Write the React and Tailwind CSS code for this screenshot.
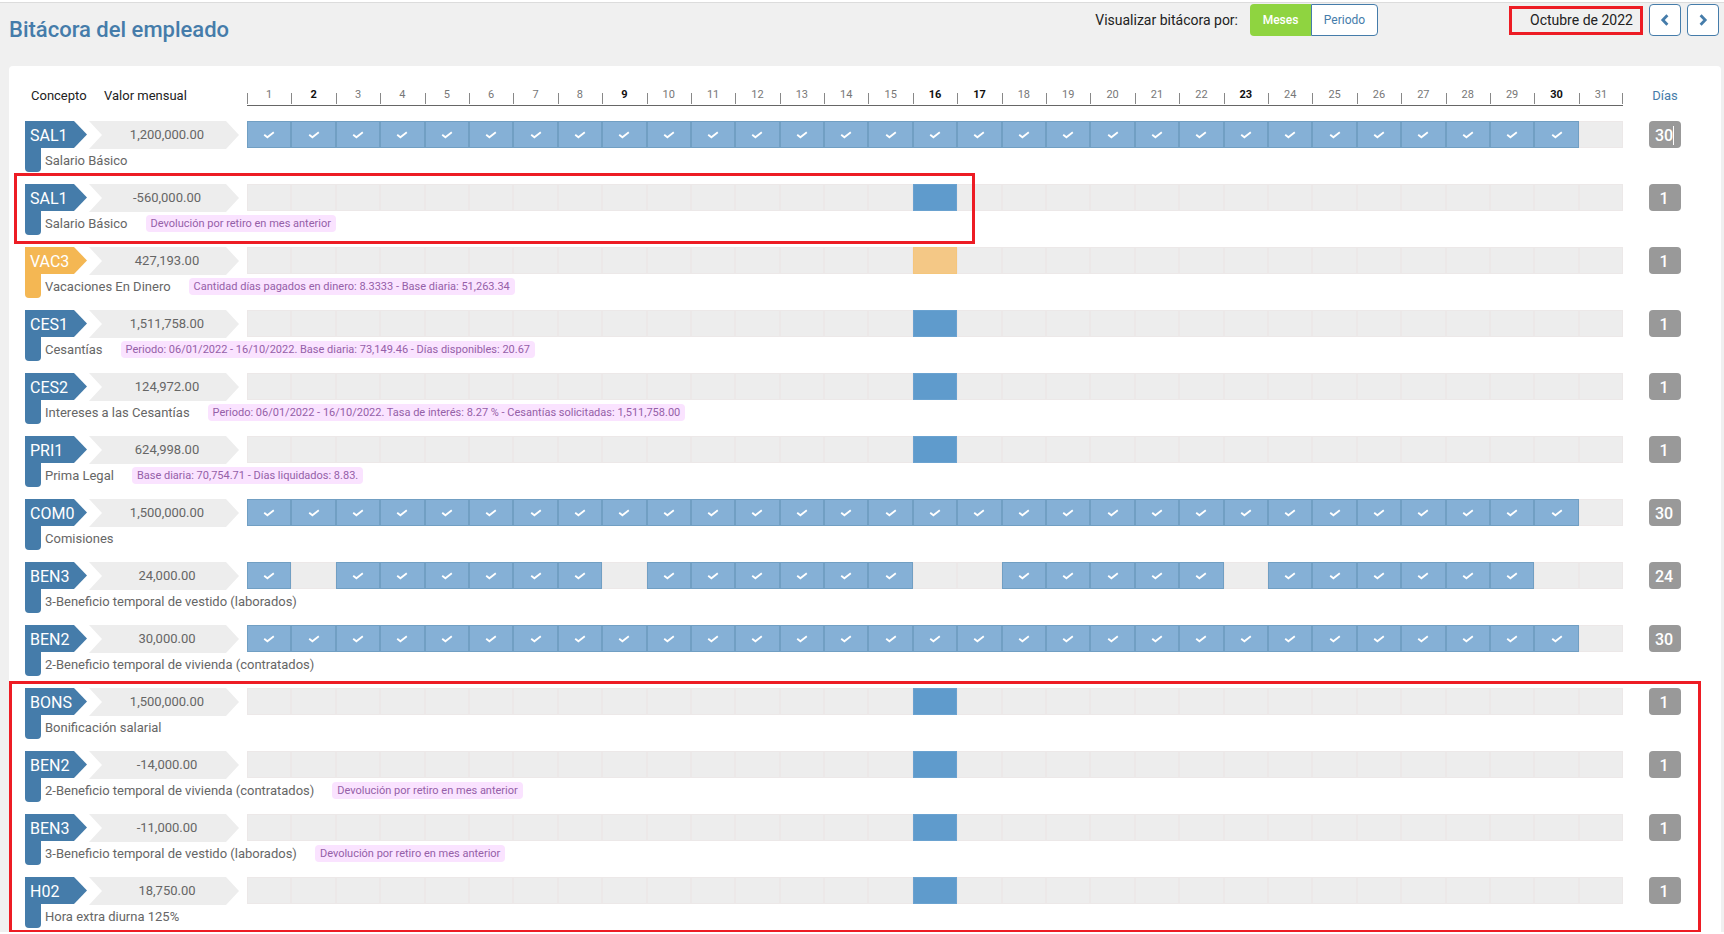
import React from "react";

const DAYS = Array.from({ length: 31 }, (_, i) => i + 1);
const BOLD_DAYS = [2, 9, 16, 17, 23, 30];
const FULL = DAYS.slice(0, 30);
const WORKED = FULL.filter((d) => !BOLD_DAYS.includes(d));

const GROUPS = [
  {
    rows: [{ code: "SAL1", value: "1,200,000.00", name: "Salario Básico", checked: FULL, days: 30, editing: true }],
  },
  {
    frame: "-left-[11px] -top-[11px] h-[71px] w-[961px]",
    rows: [{ code: "SAL1", value: "-560,000.00", name: "Salario Básico", note: "Devolución por retiro en mes anterior", days: 1 }],
  },
  {
    rows: [
      { code: "VAC3", value: "427,193.00", name: "Vacaciones En Dinero", note: "Cantidad días pagados en dinero: 8.3333 - Base diaria: 51,263.34", days: 1, orange: true },
      { code: "CES1", value: "1,511,758.00", name: "Cesantías", note: "Periodo: 06/01/2022 - 16/10/2022. Base diaria: 73,149.46 - Días disponibles: 20.67", days: 1 },
      { code: "CES2", value: "124,972.00", name: "Intereses a las Cesantías", note: "Periodo: 06/01/2022 - 16/10/2022. Tasa de interés: 8.27 % - Cesantías solicitadas: 1,511,758.00", days: 1 },
      { code: "PRI1", value: "624,998.00", name: "Prima Legal", note: "Base diaria: 70,754.71 - Días liquidados: 8.83.", days: 1 },
      { code: "COM0", value: "1,500,000.00", name: "Comisiones", checked: FULL, days: 30 },
      { code: "BEN3", value: "24,000.00", name: "3-Beneficio temporal de vestido (laborados)", checked: WORKED, days: 24 },
      { code: "BEN2", value: "30,000.00", name: "2-Beneficio temporal de vivienda (contratados)", checked: FULL, days: 30 },
    ],
  },
  {
    frame: "-left-4 -top-[7px] -bottom-[5px] right-5",
    rows: [
      { code: "BONS", value: "1,500,000.00", name: "Bonificación salarial", days: 1 },
      { code: "BEN2", value: "-14,000.00", name: "2-Beneficio temporal de vivienda (contratados)", note: "Devolución por retiro en mes anterior", days: 1 },
      { code: "BEN3", value: "-11,000.00", name: "3-Beneficio temporal de vestido (laborados)", note: "Devolución por retiro en mes anterior", days: 1 },
      { code: "H02", value: "18,750.00", name: "Hora extra diurna 125%", days: 1 },
    ],
  },
];

const ROW_GRID = "grid grid-cols-[64px_150px_minmax(0,1fr)_32px]";

function Check() {
  return (
    <svg viewBox="0 0 12 8" className="h-2 w-3" fill="none" stroke="#fff" strokeWidth="1.8" aria-hidden="true">
      <path d="M1.2 3.8 4.4 6.3 10.8 1.2" />
    </svg>
  );
}

function Chevron({ d }) {
  return (
    <svg viewBox="0 0 12 12" className="h-3 w-3" fill="none" stroke="#457caa" strokeWidth="2.8" aria-hidden="true">
      <path d={d} />
    </svg>
  );
}

function Day({ checked, event, orange }) {
  if (checked)
    return (
      <li className="flex flex-1 items-center justify-center border border-[#719fc3] bg-[#85b0d6]">
        <Check />
      </li>
    );
  if (event)
    return <li className={orange ? "flex-1 border border-[#f5c67c] bg-[#f4c886]" : "flex-1 border border-[#6aa2d0] bg-[#5f9bcc]"} />;
  return <li className="flex-1 border border-[#ece8e8] bg-[#ededed]" />;
}

function Row({ row }) {
  const color = row.orange ? "bg-[#f4b753]" : "bg-[#457caa]";
  return (
    <tr className={`${ROW_GRID} h-[51px] content-start`}>
      <td className={`${color} mr-0.5 h-[27px] pl-[5px] text-base leading-[29px] text-white [clip-path:polygon(0_0,49px_0,100%_50%,49px_100%,0_100%)]`}>
        {row.code}
      </td>
      <td className="h-7 bg-[#ededed] pl-1.5 text-center text-[13px] leading-7 text-[#666] [clip-path:polygon(0_0,137px_0,100%_50%,137px_100%,0_100%,13px_50%)]">
        {row.value}
      </td>
      <td className="pr-[26px] pl-2">
        <ul className="flex h-[27px]">
          {DAYS.map((d) => (
            <Day key={d} checked={row.checked?.includes(d)} event={!row.checked && d === 16} orange={row.orange} />
          ))}
        </ul>
      </td>
      <td className="relative">
        <input
          aria-label={`Días ${row.code}`}
          defaultValue={row.days}
          className="block h-[27px] w-8 rounded bg-[#999] pt-0.5 pr-0.5 text-center text-base font-medium text-white outline-none"
        />
        {row.editing && <i className="absolute top-[5px] left-6 h-[19px] w-px bg-white" />}
      </td>
      <td className="col-span-4 -mt-px flex h-6 items-start">
        <span className={`${color} h-6 w-4 shrink-0 rounded-b-sm`} />
        <span className="ml-1 text-[13px] leading-[26px] text-[#666]">{row.name}</span>
        {row.note && (
          <span className="mt-1 ml-[18px] rounded bg-[#fae3ff] px-[5px] text-[11px] leading-[17px] text-[#9560a8]">{row.note}</span>
        )}
      </td>
    </tr>
  );
}

export default function App() {
  return (
    <div className="bg-white pt-0.5 font-['Roboto',sans-serif] text-[#222]">
      <div className="border-t border-[#dcdcdc] bg-[#f0f0f0]">
        <header className="flex h-[63px] items-start pr-[5px] pl-[9px] text-sm">
          <h1 className="mt-2 grow text-[22px] leading-[38px] font-medium text-[#457caa]">Bitácora del empleado</h1>
          <span className="mt-px mr-3 leading-8">Visualizar bitácora por:</span>
          <div className="mt-px flex text-xs">
            <button className="h-8 w-[61px] rounded-l bg-[#8fd440] font-medium text-white">Meses</button>
            <button className="h-8 w-[67px] rounded-r border border-[#457caa] bg-white text-[#457caa]">Periodo</button>
          </div>
          <span className="mt-[3px] mr-1.5 ml-[131px] h-[29px] w-[134px] border-3 border-[#ed1c24] pl-[18px] leading-[23px] whitespace-nowrap">
            Octubre de 2022
          </span>
          <div className="mt-px flex gap-1.5">
            <button aria-label="Mes anterior" className="flex h-8 w-8 items-center justify-center rounded border border-[#457caa] bg-white">
              <Chevron d="M8.4 1.2 3.8 6 8.4 10.8" />
            </button>
            <button aria-label="Mes siguiente" className="flex h-8 w-8 items-center justify-center rounded border border-[#457caa] bg-white">
              <Chevron d="M3.6 1.2 8.2 6 3.6 10.8" />
            </button>
          </div>
        </header>
        <main className="mr-[3px] ml-[9px] rounded-t bg-white pt-5 pb-1 pl-4">
          <table className="block">
            <thead className="block pr-10">
              <tr className={`${ROW_GRID} h-[35px] text-[13px] leading-5`}>
                <th className="pl-1.5 text-left font-normal">Concepto</th>
                <th className="pl-[15px] text-left font-normal">Valor mensual</th>
                <th className="pr-[26px] pl-2 font-normal">
                  <div className="flex h-5 items-end border-b border-[#666]">
                    {DAYS.map((d) => (
                      <span
                        key={d}
                        className={`relative h-3 flex-1 text-center text-[11px] ${BOLD_DAYS.includes(d) ? "font-bold text-[#111]" : "text-[#777]"}`}
                      >
                        <i className="absolute top-0 left-0 h-[11px] w-px bg-[#888]" />
                        {d === 31 && <i className="absolute top-0 right-0 h-[11px] w-px bg-[#888]" />}
                        <span className="-mt-1.5 block leading-4">{d}</span>
                      </span>
                    ))}
                  </div>
                </th>
                <th className="text-center font-normal text-[#457caa]">Días</th>
              </tr>
            </thead>
            {GROUPS.map((g, i) => (
              <tbody key={i} className="relative mb-3 flex flex-col gap-3 pr-10 last:mb-0">
                {g.rows.map((row, j) => (
                  <Row key={j} row={row} />
                ))}
                {g.frame && (
                  <tr aria-hidden="true" className={`pointer-events-none absolute block border-3 border-[#ed1c24] ${g.frame}`} />
                )}
              </tbody>
            ))}
          </table>
        </main>
      </div>
    </div>
  );
}
